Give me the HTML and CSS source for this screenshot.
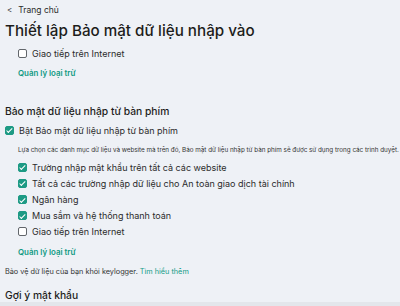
FILE: index.html
```html
<!DOCTYPE html>
<html lang="vi">
<head>
<meta charset="utf-8">
<link rel="stylesheet" href="styles.css">
</head>
<body>
<div class="page">
  <div class="back"><span class="chev">&lt;</span><span>Trang chủ</span></div>
  <h1 class="title">Thiết lập Bảo mật dữ liệu nhập vào</h1>
  <div class="group">
    <label class="check first"><span class="box"></span><span>Giao tiếp trên Internet</span></label>
    <a class="link">Quản lý loại trừ</a>
  </div>
  <h2 class="section">Bảo mật dữ liệu nhập từ bàn phím</h2>
  <label class="check top"><span class="box on"></span><span>Bật Bảo mật dữ liệu nhập từ bàn phím</span></label>
  <div class="group">
    <p class="desc">Lựa chọn các danh mục dữ liệu và website mà trên đó, Bảo mật dữ liệu nhập từ bàn phím sẽ được sử dụng trong các trình duyệt.</p>
    <div class="list">
      <label class="check"><span class="box on"></span><span>Trường nhập mật khẩu trên tất cả các website</span></label>
      <label class="check"><span class="box on"></span><span>Tất cả các trường nhập dữ liệu cho An toàn giao dịch tài chính</span></label>
      <label class="check"><span class="box on"></span><span>Ngân hàng</span></label>
      <label class="check"><span class="box on"></span><span>Mua sắm và hệ thống thanh toán</span></label>
      <label class="check"><span class="box"></span><span>Giao tiếp trên Internet</span></label>
    </div>
    <a class="link lower">Quản lý loại trừ</a>
  </div>
  <p class="note">Bảo vệ dữ liệu của bạn khỏi keylogger. <a class="inline">Tìm hiểu thêm</a></p>
  <h2 class="section last">Gợi ý mật khẩu</h2>
</div>
</body>
</html>
```
FILE: styles.css
```css
* { box-sizing: border-box; }
html, body { margin: 0; padding: 0; }
body {
  background: #eef1f6;
  font-family: Inter, "Noto Sans", sans-serif;
  color: #1d1d1b;
  width: 400px;
  height: 306px;
  overflow: hidden;
  border-bottom: 4px solid #e3e6eb;
}
.page { padding: 3px 5px 0 5px; }
.back {
  display: flex; align-items: center; gap: 6px;
  font-size: 8.5px; color: #2a2a2a; height: 14px; padding-left: 2px;
}
.chev { font-size: 8px; }
.title {
  margin: 3px 0 0 0;
  font-size: 15.2px; font-weight: 500; line-height: 22px;
  color: #1d1d1b;
}
.group { padding-left: 13px; }
.check {
  display: flex; align-items: center; gap: 5px;
  font-size: 9px; color: #2b2b2b; height: 16.2px;
}
.check.first { margin-top: 3px; height: 16px; }
.box {
  width: 9px; height: 9px; border: 1px solid #62666b; border-radius: 2px;
  background: #fff; flex: none; position: relative;
}
.box.on { background: #1d9a84; border-color: #1d9a84; }
.box.on::after {
  content: ""; position: absolute; left: 2.4px; top: 0.6px;
  width: 2.4px; height: 4.6px; border: solid #fff; border-width: 0 1.3px 1.3px 0;
  transform: rotate(45deg);
}
.link {
  display: block; color: #0f9a83; font-size: 7.9px; font-weight: 600;
  margin-top: 6px; line-height: 12px;
}
.link.lower { margin-top: 6px; }
.section {
  margin: 25px 0 0 0; font-size: 10.3px; font-weight: 500; line-height: 14px; color: #1d1d1b;
}
.check.top { margin-top: 4px; height: 16px; }
.desc { margin: 7px 0 4px 0; font-size: 6.3px; line-height: 10px; color: #333; white-space: nowrap; }
.list { display: flex; flex-direction: column; }
.note { margin: 8px 0 0 0; font-size: 7.3px; line-height: 12px; color: #333; }
.inline { color: #129c86; }
.section.last { margin-top: 10px; }
```
